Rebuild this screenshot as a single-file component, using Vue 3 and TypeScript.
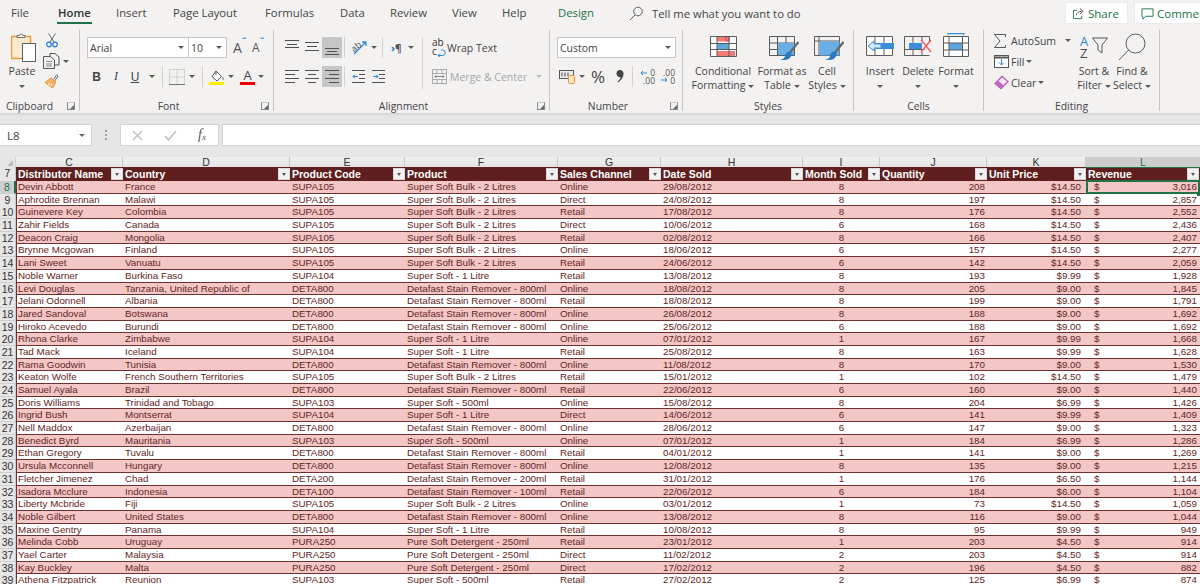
<script setup lang="ts">
const SB2 = 'Super Soft Bulk - 2 Litres'
const S1 = 'Super Soft - 1 Litre'
const S5 = 'Super Soft - 500ml'
const D8 = 'Detafast Stain Remover - 800ml'
const PS = 'Pure Soft Detergent - 250ml'
type Row = [string, string, string, string, string, string, string, string, string, string]
const raw: Row[] = [
  ['Devin Abbott','France','SUPA105',SB2,'Online','29/08/2012','8','208','$14.50','3,016'],
  ['Aphrodite Brennan','Malawi','SUPA105',SB2,'Direct','24/08/2012','8','197','$14.50','2,857'],
  ['Guinevere Key','Colombia','SUPA105',SB2,'Retail','17/08/2012','8','176','$14.50','2,552'],
  ['Zahir Fields','Canada','SUPA105',SB2,'Direct','10/06/2012','6','168','$14.50','2,436'],
  ['Deacon Craig','Mongolia','SUPA105',SB2,'Retail','02/08/2012','8','166','$14.50','2,407'],
  ['Brynne Mcgowan','Finland','SUPA105',SB2,'Online','18/06/2012','6','157','$14.50','2,277'],
  ['Lani Sweet','Vanuatu','SUPA105',SB2,'Retail','24/06/2012','6','142','$14.50','2,059'],
  ['Noble Warner','Burkina Faso','SUPA104',S1,'Retail','13/08/2012','8','193','$9.99','1,928'],
  ['Levi Douglas','Tanzania, United Republic of','DETA800',D8,'Online','18/08/2012','8','205','$9.00','1,845'],
  ['Jelani Odonnell','Albania','DETA800',D8,'Retail','18/08/2012','8','199','$9.00','1,791'],
  ['Jared Sandoval','Botswana','DETA800',D8,'Online','26/08/2012','8','188','$9.00','1,692'],
  ['Hiroko Acevedo','Burundi','DETA800',D8,'Online','25/06/2012','6','188','$9.00','1,692'],
  ['Rhona Clarke','Zimbabwe','SUPA104',S1,'Online','07/01/2012','1','167','$9.99','1,668'],
  ['Tad Mack','Iceland','SUPA104',S1,'Retail','25/08/2012','8','163','$9.99','1,628'],
  ['Rama Goodwin','Tunisia','DETA800',D8,'Online','11/08/2012','8','170','$9.00','1,530'],
  ['Keaton Wolfe','French Southern Territories','SUPA105',SB2,'Retail','15/01/2012','1','102','$14.50','1,479'],
  ['Samuel Ayala','Brazil','DETA800',D8,'Retail','22/06/2012','6','160','$9.00','1,440'],
  ['Doris Williams','Trinidad and Tobago','SUPA103',S5,'Online','15/08/2012','8','204','$6.99','1,426'],
  ['Ingrid Bush','Montserrat','SUPA104',S1,'Direct','14/06/2012','6','141','$9.99','1,409'],
  ['Nell Maddox','Azerbaijan','DETA800',D8,'Online','28/06/2012','6','147','$9.00','1,323'],
  ['Benedict Byrd','Mauritania','SUPA103',S5,'Online','07/01/2012','1','184','$6.99','1,286'],
  ['Ethan Gregory','Tuvalu','DETA800',D8,'Retail','04/01/2012','1','141','$9.00','1,269'],
  ['Ursula Mcconnell','Hungary','DETA800',D8,'Online','12/08/2012','8','135','$9.00','1,215'],
  ['Fletcher Jimenez','Chad','DETA200','Detafast Stain Remover - 200ml','Retail','31/01/2012','1','176','$6.50','1,144'],
  ['Isadora Mcclure','Indonesia','DETA100','Detafast Stain Remover - 100ml','Retail','22/06/2012','6','184','$6.00','1,104'],
  ['Liberty Mcbride','Fiji','SUPA105',SB2,'Online','03/01/2012','1','73','$14.50','1,059'],
  ['Noble Gilbert','United States','DETA800',D8,'Online','13/08/2012','8','116','$9.00','1,044'],
  ['Maxine Gentry','Panama','SUPA104',S1,'Retail','10/08/2012','8','95','$9.99','949'],
  ['Melinda Cobb','Uruguay','PURA250',PS,'Retail','23/01/2012','1','203','$4.50','914'],
  ['Yael Carter','Malaysia','PURA250',PS,'Direct','11/02/2012','2','203','$4.50','914'],
  ['Kay Buckley','Malta','PURA250',PS,'Direct','17/02/2012','2','196','$4.50','882'],
  ['Athena Fitzpatrick','Reunion','SUPA103',S5,'Retail','27/02/2012','2','125','$6.99','874'],
]
const rows = raw.map((cells, i) => ({ num: i + 8, cells, pink: i % 2 === 0, selected: i === 0 }))
const letters = ['C','D','E','F','G','H','I','J','K','L']
const heads = ['Distributor Name','Country','Product Code','Product','Sales Channel','Date Sold','Month Sold','Quantity','Unit Price','Revenue']
const tabs = ['File','Home','Insert','Page Layout','Formulas','Data','Review','View','Help','Design']
</script>

<template>
  <div class="app">
    <header class="tabbar">
      <nav class="tabs">
        <span v-for="t in tabs" :key="t" class="tab" :class="['tab-' + t.replace(' ', ''), { green: t === 'Design' }]">{{ t }}</span>
      </nav>
      <div class="tell">
        <svg width="14" height="15" viewBox="0 0 14 15" fill="none" stroke="#5f5f5f"><circle cx="9" cy="5.5" r="4.3"/><path d="M6 9 1 14"/></svg>
        <span>Tell me what you want to do</span>
      </div>
      <div class="share-wrap">
        <button class="topbtn share">
          <svg width="13" height="13" viewBox="0 0 14 14" fill="none" stroke="#217346"><path d="M5.5 3.5H1.5v9h9v-3"/><path d="M4.5 9c.5-3 3-4.5 6-4.5M8.5 1.5l3.500 3-3.500 3" stroke="#555"/></svg>
          <span>Share</span>
        </button>
        <button class="topbtn comments">
          <svg width="13" height="13" viewBox="0 0 14 14" fill="none" stroke="#217346"><path d="M1 2h12v8H5l-3 3v-3H1z"/></svg>
          <span>Comments</span>
        </button>
      </div>
    </header>

    <section class="ribbon">
      <!-- Clipboard -->
      <div class="group g-clip">
        <div class="body">
          <div class="big w44">
            <div class="bigicon pasteico">
              <svg width="26" height="30" viewBox="0 0 26 30" fill="none">
                <rect x="0.5" y="3.5" width="19" height="22" fill="#fbe9cf" stroke="#ec9b3b" stroke-width="1.5"/>
                <path d="M6 4.500V2.500h2.500a1.500 1.500 0 0 1 3 0H14v2z" fill="#fff" stroke="#6a6a6a"/>
                <rect x="11.5" y="10.5" width="13" height="18" fill="#fff" stroke="#5f5f5f"/>
              </svg>
            </div>
            <span class="l">Paste</span>
            <span class="l"><i class="caret"></i></span>
          </div>
          <div class="clipside">
            <svg width="12" height="15" viewBox="0 0 12 15" fill="none"><path d="M2.500 0.500 8 9M9.500 0.500 4 9" stroke="#666"/><circle cx="3" cy="11.5" r="2.3" stroke="#2b7cd3" stroke-width="1.2"/><circle cx="9" cy="11.5" r="2.3" stroke="#2b7cd3" stroke-width="1.2"/></svg>
            <div class="row6">
              <svg width="17" height="16" viewBox="0 0 17 16" fill="none" stroke="#555"><path d="M7 3.5V.5h5l4 3.500v8h-4"/><path d="M.5 3.500h7l4 3.500v8.500H.5z" fill="#f3f2f1"/><path d="M3 8.500h6M3 11h6M3 13h6" stroke="#888"/></svg>
              <i class="caret"></i>
            </div>
            <svg width="15" height="15" viewBox="0 0 15 15" fill="none"><path d="M9.500 5.500 12.500 1l1.500 1-3 4.500" fill="#fff" stroke="#666"/><path d="M7 4l5 3.500L8.500 14 1 8.500z" fill="#f6b26b" stroke="#e8923a"/><path d="M4 11l2-2M6.500 12.500 8 10" stroke="#fff"/></svg>
          </div>
        </div>
        <div class="label lb-clip"><span>Clipboard</span><i class="launch"></i></div>
      </div>

      <!-- Font -->
      <div class="group g-font">
        <div class="body stack">
          <div class="row">
            <div class="combo w101">Arial<i class="caret end"></i></div>
            <div class="combo w39">10<i class="caret end"></i></div>
            <span class="fsz ml6">A<sup class="up">ˆ</sup></span>
            <span class="fsz small ml3">A<sup class="dn">ˇ</sup></span>
          </div>
          <div class="row">
            <span class="fmt bold">B</span>
            <span class="fmt ital">I</span>
            <span class="fmt und">U</span>
            <i class="caret ml4"></i>
            <i class="sep ml7"></i>
            <svg class="ml6" width="16" height="16" viewBox="0 0 16 16" fill="none" stroke="#b5b5b5"><path d="M.5.5h15v15H.5zM8 .5v15M.5 8h15" stroke-dasharray="1 1"/><path d="M0 15.500h16" stroke="#777"/></svg>
            <i class="caret ml4"></i>
            <i class="sep ml7"></i>
            <span class="colorbtn ml6">
              <svg width="14" height="12" viewBox="0 0 14 12" fill="none"><path d="M6 1l5.500 5.500L7 11 2 6.500z" fill="#fff" stroke="#555"/><path d="M6 1V5" stroke="#555"/><path d="M12.500 7c.8 1.300 1 2 .5 2.700" stroke="#555"/></svg>
              <b class="yellow"></b>
            </span>
            <i class="caret ml4"></i>
            <span class="colorbtn ml6">
              <span class="acolor">A</span>
              <b class="red"></b>
            </span>
            <i class="caret ml3"></i>
          </div>
        </div>
        <div class="label lb-l"><span>Font</span><i class="launch"></i></div>
      </div>

      <!-- Alignment -->
      <div class="group g-align">
        <div class="body">
          <div class="stack leftcol">
            <div class="row">
              <svg class="ico20" width="20" height="21" viewBox="0 0 20 21" fill="none" stroke="#505050"><path d="M3 3.500h14M5 7.500h10M3 10.500h14"/></svg>
              <svg class="ico20" width="20" height="21" viewBox="0 0 20 21" fill="none" stroke="#505050"><path d="M3 5.500h14M5 9.500h10M3 13.500h14"/></svg>
              <svg class="ico20 on" width="20" height="21" viewBox="0 0 20 21" fill="none" stroke="#505050"><path d="M3 11.500h14M5 14.500h10M3 17.500h14"/></svg>
              <i class="sep ml2"></i>
              <svg class="ml6" width="17" height="17" viewBox="0 0 17 17" fill="none"><text x="0" y="11" font-size="9" fill="#555" font-family="Open Sans" transform="rotate(-40 5 8)">ab</text><path d="M3 15 15 3M15 3h-4M15 3v4" stroke="#2b88d8" stroke-width="1.3"/></svg>
              <i class="caret ml3"></i>
              <i class="sep ml5"></i>
              <span class="pil ml8"><b>›</b>¶</span>
              <i class="caret ml6"></i>
            </div>
            <div class="row">
              <svg class="ico20" width="20" height="21" viewBox="0 0 20 21" fill="none" stroke="#505050"><path d="M3 4.500h14M3 8.500h10M3 12.500h14M3 16.500h10"/></svg>
              <svg class="ico20" width="20" height="21" viewBox="0 0 20 21" fill="none" stroke="#505050"><path d="M3 4.500h14M6 8.500h8M3 12.500h14M6 16.500h8"/></svg>
              <svg class="ico20 on" width="20" height="21" viewBox="0 0 20 21" fill="none" stroke="#505050"><path d="M3 4.500h14M7 8.500h10M3 12.500h14M7 16.500h10"/></svg>
              <i class="sep ml2"></i>
              <svg class="ml7" width="13" height="13" viewBox="0 0 13 13" fill="none" stroke="#505050"><path d="M0 .5h13M7 4.500h6M7 8.500h6M0 12.500h13"/><path d="M6 6.500H1M3 4.500l-2 2 2 2" stroke="#2b88d8"/></svg>
              <svg class="ml7" width="13" height="13" viewBox="0 0 13 13" fill="none" stroke="#505050"><path d="M0 .5h13M7 4.500h6M7 8.500h6M0 12.500h13"/><path d="M1 6.500h5M4 4.500l2 2-2 2" stroke="#2b88d8"/></svg>
            </div>
          </div>
          <i class="sep tall"></i>
          <div class="stack wrapcol">
            <div class="row">
              <span class="abc"><span>ab</span><span>c<svg width="9" height="8" viewBox="0 0 9 8" fill="none" stroke="#2b88d8"><path d="M1 6.500h4.500a2 2 0 0 0 0-5.500H4M3 4.500 1 6.500l2 1.500"/></svg></span></span>
              <span class="wraptext">Wrap Text</span>
            </div>
            <div class="row">
              <svg width="15" height="15" viewBox="0 0 15 15" fill="none" stroke="#ababab"><path d="M.5.5h14v14H.5zM.5 4.500h14M.5 10.500h14M5 .5v4M10 .5v4M5 10.500v4M10 10.500v4"/><path d="M3 7.500h9M4.500 6 3 7.500 4.500 9M10.500 6 12 7.500 10.500 9" stroke="#8a8a8a"/></svg>
              <span class="mergetext">Merge &amp; Center</span>
              <i class="caret light ml9"></i>
            </div>
          </div>
        </div>
        <div class="label lb-l"><span>Alignment</span><i class="launch"></i></div>
      </div>

      <!-- Number -->
      <div class="group g-num">
        <div class="body stack">
          <div class="row"><div class="combo w118">Custom<i class="caret end"></i></div></div>
          <div class="row">
            <svg class="ml2" width="16" height="15" viewBox="0 0 16 15" fill="none"><rect x=".5" y="1.5" width="14" height="8" stroke="#555" fill="#eee"/><path d="M3 3.500v4M6 3.500v4M9 3.500v4" stroke="#444"/><rect x="9.5" y="6.5" width="6" height="8" rx="1" fill="#fbe3c5" stroke="#e8923a"/></svg>
            <i class="caret ml4"></i>
            <span class="pct">%</span>
            <svg class="comma" width="8" height="13" viewBox="0 0 8 13"><path d="M4 0a3.500 3.500 0 0 1 3.500 4c0 3.500-2.500 6.500-5.500 8.500l-.5-.8C3.500 10 4.500 8.500 4.700 7.200 2.500 7.600.5 6 .5 3.800A3.600 3.600 0 0 1 4 0z" fill="#444"/></svg>
            <i class="sep ml8"></i>
            <span class="dec ml7"><svg width="15" height="15" viewBox="0 0 15 15" fill="none" stroke="#2b88d8"><path d="M7 4H1M3 2 1 4l2 2"/></svg><em class="d1">0</em><em class="d2">.00</em></span>
            <span class="dec ml5"><em class="d3">.00</em><svg width="15" height="15" viewBox="0 0 15 15" fill="none" stroke="#2b88d8"><path d="M1 11h6M5 9l2 2-2 2"/></svg><em class="d4">0</em></span>
          </div>
        </div>
        <div class="label lb-l"><span>Number</span><i class="launch"></i></div>
      </div>

      <!-- Styles -->
      <div class="group g-styles">
        <div class="body">
          <div class="big w60">
            <div class="bigicon ib">
              <svg width="27" height="21" viewBox="0 0 27 21" fill="none">
                <path d="M.5.5h26v20H.5z" fill="#fff"/>
                <path d="M7 .5h12v5H7zM7 15h18v5H7z" fill="#f47a7a"/>
                <path d="M7 8h12v5H7z" fill="#5ea6e0"/>
                <path d="M19 1h-3v4h3zM19 8h-1" stroke="#e04a4a"/>
                <path d="M.5.5h26v20H.5zM.5 7.500h26M.5 13.500h26M7 .5v20M19 .5v20" stroke="#5b5b5b"/>
              </svg>
            </div>
            <span class="l">Conditional</span>
            <span class="l">Formatting<i class="caret ml3"></i></span>
          </div>
          <div class="big w58">
            <div class="bigicon ib2">
              <svg width="30" height="25" viewBox="0 0 30 25" fill="none">
                <path d="M.5.5h25v19H.5zM.5 7h25M.5 13.500h25M8.500.5v19M17 .5v19" stroke="#5b5b5b"/>
                <path d="M9 7h16v12H9z" fill="#6aaee6"/>
                <path d="M29.500 6 20.500 17" stroke="#6b6b6b" stroke-width="2.5"/>
                <path d="M21 15.500c-3-.5-4.500 2-5 5-.3 1.500-2 2.500-5 3 5 1 9 .5 11-3 1-1.500.5-4-1-5z" fill="#2b79c2"/>
              </svg>
            </div>
            <span class="l">Format as</span>
            <span class="l">Table<i class="caret ml3"></i></span>
          </div>
          <div class="big w32">
            <div class="bigicon ib2">
              <svg width="30" height="25" viewBox="0 0 30 25" fill="none">
                <path d="M.5.5h25v19H.5zM.5 5h25M5 .5v19" stroke="#5b5b5b"/>
                <path d="M5.500 5.500h20v14h-20z" fill="#6aaee6"/>
                <path d="M29.500 6 20.500 17" stroke="#6b6b6b" stroke-width="2.5"/>
                <path d="M21 15.500c-3-.5-4.500 2-5 5-.3 1.500-2 2.500-5 3 5 1 9 .5 11-3 1-1.500.5-4-1-5z" fill="#2b79c2"/>
              </svg>
            </div>
            <span class="l">Cell</span>
            <span class="l">Styles<i class="caret ml3"></i></span>
          </div>
        </div>
        <div class="label"><span>Styles</span></div>
      </div>

      <!-- Cells -->
      <div class="group g-cells">
        <div class="body">
          <div class="big w38">
            <div class="bigicon ib">
              <svg width="28" height="20" viewBox="0 0 28 20" fill="none">
                <path d="M.5.5h26v19H.5z" stroke="#5b5b5b" fill="#fff"/><path d="M9 .5v19M18 .5v19" stroke="#5b5b5b"/>
                <rect x="10" y="7" width="18" height="6" fill="#3b8edb"/>
                <path d="M2 10l6-5v3h7v4H8v3z" fill="#d8eafa" stroke="#3b8edb"/>
              </svg>
            </div>
            <span class="l">Insert</span>
            <span class="l"><i class="caret"></i></span>
          </div>
          <div class="big w38">
            <div class="bigicon ib">
              <svg width="28" height="20" viewBox="0 0 28 20" fill="none">
                <path d="M.5.5h25v6M.5 .5v19h25M.5 13.500h20M9 .5v19M18 .5v5M18 16v3.500" stroke="#5b5b5b"/>
                <rect x="5" y="7" width="13" height="6" fill="#3b8edb"/>
                <path d="M17 4l10 12M27 4 17 16" stroke="#f25c5c" stroke-width="1.4"/>
              </svg>
            </div>
            <span class="l">Delete</span>
            <span class="l"><i class="caret"></i></span>
          </div>
          <div class="big w38">
            <div class="bigicon ib3">
              <svg width="26" height="24" viewBox="0 0 26 24" fill="none">
                <path d="M5 .5h16" stroke="#3b8edb" stroke-width="1.5"/><path d="M5 0v2M21 0v2" stroke="#3b8edb"/>
                <path d="M.5 3.500h25v20H.5z" fill="#fff" stroke="#5b5b5b"/>
                <rect x="6" y="10" width="14" height="7" fill="#5ea6e0"/>
                <path d="M.5 10h25M.5 17h25M6 3.500v20M19.500 3.500v20" stroke="#5b5b5b"/>
              </svg>
            </div>
            <span class="l">Format</span>
            <span class="l"><i class="caret"></i></span>
          </div>
        </div>
        <div class="label"><span>Cells</span></div>
      </div>

      <!-- Editing -->
      <div class="group g-edit">
        <div class="body">
          <div class="editcol">
            <div class="editrow">
              <span class="ei"><svg width="12" height="14" viewBox="0 0 12 14" fill="none" stroke="#555"><path d="M11.500 3V.5H.5L6 7 .5 13.500h11V11"/></svg></span>
              <span>AutoSum</span>
              <i class="caret ml9"></i>
            </div>
            <div class="editrow">
              <span class="ei"><svg width="15" height="13" viewBox="0 0 15 13" fill="none"><rect x=".5" y=".5" width="14" height="12" fill="#fff" stroke="#555"/><path d="M.5 2.500h14" stroke="#555" stroke-width="2"/><path d="M7.500 4v6M5 7.500l2.500 2.500L10 7.500" stroke="#2b88d8"/></svg></span>
              <span>Fill</span>
              <i class="caret ml2"></i>
            </div>
            <div class="editrow">
              <span class="ei"><svg width="15" height="15" viewBox="0 0 15 15" fill="none"><path d="M1 8.500 8 1.500l6 5-7 7z" fill="#f5e6f5" stroke="#b55fb5" stroke-width="1.3"/><path d="M1 8.500l3-3 6 5-3 3z" fill="#c26ac2"/></svg></span>
              <span>Clear</span>
              <i class="caret ml2"></i>
            </div>
          </div>
          <div class="big w38">
            <div class="bigicon sortico">
              <span class="az"><b>A</b><b class="z">Z</b></span>
              <svg width="16" height="17" viewBox="0 0 16 17" fill="none" stroke="#5b5b5b"><path d="M.5 1h15L10 8v8l-4-3V8z"/></svg>
            </div>
            <span class="l">Sort &amp;</span>
            <span class="l">Filter<i class="caret ml3"></i></span>
          </div>
          <div class="big w38">
            <div class="bigicon ib0">
              <svg width="28" height="28" viewBox="0 0 28 28" fill="none" stroke="#5b5b5b"><circle cx="17.5" cy="10.5" r="9.500"/><path d="M10.500 17 1 27"/></svg>
            </div>
            <span class="l">Find &amp;</span>
            <span class="l">Select<i class="caret ml3"></i></span>
          </div>
        </div>
        <div class="label"><span>Editing</span></div>
      </div>
    </section>

    <section class="fbar">
      <div class="namebox">L8<i class="caret end dk"></i></div>
      <div class="dots"><i></i><i></i><i></i></div>
      <div class="fbtns">
        <svg width="11" height="11" viewBox="0 0 11 11" fill="none" stroke="#c2c2c2" stroke-width="1.4"><path d="M1 1l9 9M10 1l-9 9"/></svg>
        <svg width="13" height="11" viewBox="0 0 13 11" fill="none" stroke="#c2c2c2" stroke-width="1.6"><path d="M1 6l3.500 4L12 1"/></svg>
        <span class="fx">f<sub>x</sub></span>
      </div>
      <div class="finput"></div>
    </section>

    <section class="sheet">
      <div class="gridrow colhead">
        <div class="corner"><i></i></div>
        <div v-for="l in letters" :key="l" class="letter" :class="{ cur: l === 'L' }">{{ l }}</div>
      </div>
      <div class="gridrow headrow">
        <div class="rownum">7</div>
        <div v-for="h in heads" :key="h" class="hcell">
          <span>{{ h }}</span>
          <i class="filter"></i>
        </div>
      </div>
      <div v-for="r in rows" :key="r.num" class="gridrow datarow" :class="{ pink: r.pink }">
        <div class="rownum" :class="{ cur: r.selected }">{{ r.num }}</div>
        <div class="c first">{{ r.cells[0] }}</div>
        <div class="c">{{ r.cells[1] }}</div>
        <div class="c">{{ r.cells[2] }}</div>
        <div class="c">{{ r.cells[3] }}</div>
        <div class="c">{{ r.cells[4] }}</div>
        <div class="c">{{ r.cells[5] }}</div>
        <div class="c mid">{{ r.cells[6] }}</div>
        <div class="c num">{{ r.cells[7] }}</div>
        <div class="c num price">{{ r.cells[8] }}</div>
        <div class="c rev" :class="{ sel: r.selected }"><span class="dollar">$</span><span>{{ r.cells[9] }}</span></div>
      </div>
    </section>
  </div>
</template>

<style>
html, body { margin: 0; background: #f3f2f1; }
</style>

<style scoped>
.app { width: 1200px; height: 584px; overflow: hidden; background: #f3f2f1; font-family: "Open Sans", "Noto Sans", sans-serif; color: #444; font-size: 10.5px; }
i, b, em { font-style: normal; }
button { font: inherit; }

/* tab bar */
.tabbar { height: 28px; display: flex; align-items: flex-start; }
.tabs { display: flex; padding-left: 11px; width: 619px; flex: none; box-sizing: border-box; }
.tab { font-size: 11.3px; line-height: 26px; height: 26px; color: #444; box-sizing: border-box; white-space: nowrap; }
.tab-File { width: 47px; }
.tab-Home { width: 58px; font-weight: 600; color: #333; position: relative; }
.tab-Home::after { content: ""; position: absolute; left: -1px; width: 35px; top: 22px; height: 2px; background: #217346; }
.tab-Insert { width: 57px; }
.tab-PageLayout { width: 92px; }
.tab-Formulas { width: 75px; }
.tab-Data { width: 50px; }
.tab-Review { width: 62px; }
.tab-View { width: 50px; }
.tab-Help { width: 56px; }
.tab-Design { width: 50px; }
.green { color: #217346; }
.tell { display: flex; align-items: center; gap: 9px; height: 26px; width: 437px; flex: none; font-size: 11.3px; margin-left: 10px; box-sizing: border-box; }
.share-wrap { display: flex; gap: 8px; padding-top: 3px; white-space: nowrap; flex: none; }
.topbtn { height: 20px; display: flex; align-items: center; gap: 3px; border: 0; background: #fff; color: #217346; font-size: 11.5px; padding: 0 0 0 6px; box-shadow: 0 0 0 1px #ecebea; flex: none; }
.topbtn svg { flex: none; }
.share { width: 61px; }
.comments { width: 65px; overflow: hidden; }

/* ribbon */
.ribbon { height: 85px; display: flex; padding-top: 2px; box-sizing: border-box; }
.group { height: 81px; border-right: 1px solid #c8c6c4; display: flex; flex-direction: column; box-sizing: content-box; flex: none; }
.g-clip { width: 79px; }
.g-font { width: 193px; }
.g-align { width: 275px; }
.g-num { width: 132px; }
.g-styles { width: 170px; }
.g-cells { width: 129px; }
.g-edit { width: 175px; }
.body { flex: 1; display: flex; min-height: 0; }
.label { height: 14px; line-height: 14px; font-size: 10.4px; text-align: center; position: relative; color: #444; margin-bottom: -2px; flex: none; }
.lb-l { padding-right: 16px; }
.lb-clip { padding-right: 20px; }
.launch { position: absolute; right: 4px; top: 3px; width: 8px; height: 8px; border: 1px solid #8a8a8a; border-top-color: #c8c8c8; box-sizing: border-box; }
.launch::after { content: ""; position: absolute; right: 0; bottom: 0; border-style: solid; border-width: 0 0 4px 4px; border-color: transparent transparent #666 transparent; }

.caret { display: inline-block; width: 0; height: 0; border-style: solid; border-width: 3px 3px 0 3px; border-color: #5a5a5a transparent transparent transparent; vertical-align: middle; flex: none; }
.caret.light { border-top-color: #b9b9b9; }
.caret.end { margin-left: auto; margin-right: 4px; }
.caret.dk { border-top-color: #666; margin-right: 6px; }
.ml2 { margin-left: 2px; } .ml3 { margin-left: 3px; } .ml4 { margin-left: 4px; } .ml5 { margin-left: 5px; }
.ml6 { margin-left: 6px; } .ml7 { margin-left: 7px; } .ml8 { margin-left: 8px; } .ml9 { margin-left: 9px; }
.sep { display: block; width: 1px; height: 21px; background: #d4d2d0; flex: none; }
.sep.tall { height: 52px; margin-top: 7px; }

.big { display: flex; flex-direction: column; align-items: center; flex: none; padding-top: 3px; box-sizing: border-box; }
.big .l { height: 14px; line-height: 14px; white-space: nowrap; font-size: 10.5px; color: #444; }
.bigicon { height: 31px; display: flex; align-items: flex-start; justify-content: center; }
.pasteico { padding-left: 3px; }
.ib { padding-top: 3px; height: 28px; }
.ib2 { padding-top: 3px; height: 28px; padding-left: 3px; }
.w44 { width: 44px; } .w60 { width: 60px; } .w58 { width: 58px; } .w32 { width: 32px; } .w38 { width: 38px; }

.clipside { width: 28px; display: flex; flex-direction: column; gap: 5px; padding-top: 3px; box-sizing: border-box; }
.row6 { display: flex; align-items: center; gap: 3px; margin-left: -1px; }
.clipside > svg:first-child { margin-left: 2px; }

.stack { display: flex; flex-direction: column; gap: 8px; padding-top: 7px; box-sizing: border-box; }
.row { display: flex; align-items: center; height: 21px; flex: none; }
.g-font .body { padding-left: 7px; }
.g-align .body { padding-left: 8px; }
.g-num .body { padding-left: 7px; }
.g-styles .body { padding-left: 10px; }
.g-cells .body { padding-left: 7px; }
.leftcol { width: 140px; flex: none; }
.combo { height: 21px; background: #fff; border: 1px solid #c8c6c4; box-sizing: border-box; display: flex; align-items: center; padding-left: 2px; font-size: 10.5px; color: #444; }
.w101 { width: 102px; } .w39 { width: 39px; margin-left: -1px; } .w118 { width: 119px; }
.fsz { font-size: 14px; color: #555; line-height: 21px; display: inline-flex; width: 16px; }
.fsz.small { font-size: 12px; }
.fsz sup { font-size: 10px; color: #2b88d8; line-height: 1; font-weight: 700; }
.fmt { width: 19px; text-align: center; font-size: 12px; color: #444; font-family: "Liberation Serif", serif; }
.fmt.bold { font-weight: 700; font-family: "Liberation Sans", sans-serif; }
.fmt.ital { font-style: italic; padding-left: 1px; box-sizing: border-box; }
.fmt.und { text-decoration: underline; width: 20px; font-family: "Liberation Sans", sans-serif; }
.colorbtn { display: flex; flex-direction: column; align-items: center; width: 15px; height: 16px; justify-content: flex-end; }
.yellow, .red { display: block; width: 15px; height: 3px; background: #ffee00; flex: none; }
.red { background: #f00000; }
.acolor { font-size: 13px; line-height: 13px; color: #444; }

.ico20 { flex: none; box-sizing: border-box; }
.ico20.on { background: #c6c6c6; }
.pil { font-size: 10px; font-weight: 700; color: #555; width: 11px; white-space: nowrap; line-height: 12px; }
.pil b { color: #2b88d8; }
.wrapcol { padding-left: 9px; }
.abc { display: flex; flex-direction: column; font-size: 10px; line-height: 9px; color: #333; width: 15px; white-space: nowrap; }
.abc svg { vertical-align: middle; }
.wraptext { font-size: 10.5px; color: #444; }
.mergetext { font-size: 10.5px; color: #a6a6a6; margin-left: 3px; white-space: nowrap; }

.pct { font-size: 17px; line-height: 21px; color: #444; margin-left: 6px; width: 16px; }
.comma { margin-left: 9px; flex: none; }
.dec { position: relative; width: 15px; height: 16px; display: block; }
.dec svg { position: absolute; left: 0; top: 0; }
.dec em { position: absolute; font-size: 8.5px; line-height: 8px; color: #555; white-space: nowrap; }
.d1 { right: 0; top: 0; } .d2 { right: 0; bottom: 0; } .d3 { right: 0; top: 0; } .d4 { right: 0; bottom: 0; }

.editcol { width: 91px; padding-left: 10px; box-sizing: border-box; flex: none; }
.editrow { display: flex; align-items: center; height: 21px; white-space: nowrap; font-size: 10.5px; }
.ei { width: 17px; display: flex; flex: none; }
.sortico { padding-top: 2px; height: 29px; align-items: flex-start; }
.az { display: flex; flex-direction: column; font-size: 13px; line-height: 12px; width: 12px; color: #2b88d8; }
.az b { font-weight: 400; }
.az .z { color: #444; }
.sortico svg { margin-top: 2px; }

/* formula bar */
.fbar { height: 44px; background: linear-gradient(#cfcfcf 0, #e6e6e6 3px, #e6e6e6 100%); display: flex; padding-top: 11px; box-sizing: border-box; align-items: flex-start; }
.namebox { width: 92px; height: 22px; background: #fff; border: 1px solid #d4d4d4; border-left: 0; box-sizing: border-box; display: flex; align-items: center; padding-left: 7px; font-size: 11.5px; color: #444; flex: none; }
.dots { width: 28px; height: 22px; display: flex; flex-direction: column; gap: 2px; align-items: center; justify-content: center; flex: none; }
.dots i { width: 2px; height: 2px; background: #a0a0a0; }
.fbtns { width: 99px; height: 22px; background: #fff; border: 1px solid #d4d4d4; box-sizing: border-box; display: flex; align-items: center; gap: 21px; padding-left: 11px; flex: none; }
.fx { font-family: "Liberation Serif", serif; font-style: italic; font-size: 14px; color: #555; }
.fx sub { font-size: 9px; vertical-align: -1px; }
.finput { flex: 1; height: 22px; margin-left: 3px; background: #fff; border: 1px solid #d4d4d4; border-right: 0; box-sizing: border-box; }

/* sheet */
.sheet { background: #fff; font-family: "Liberation Sans", Arial, sans-serif; }
.gridrow { display: grid; grid-template-columns: 16px 107px 167px 115px 153px 103px 142px 77px 107px 99px 114px; box-sizing: border-box; }
.colhead { height: 10px; background: #e6e6e6; font-size: 10.5px; line-height: 10px; color: #333; }
.corner { position: relative; border-right: 1px solid #cfcfcf; box-sizing: border-box; }
.corner i { position: absolute; right: 2px; bottom: 1px; border-style: solid; border-width: 0 0 6px 6px; border-color: transparent transparent #bdbdbd transparent; }
.letter { text-align: center; border-right: 1px solid #c9c9c9; box-sizing: border-box; background: linear-gradient(#efefef, #e4e4e4); }
.letter.cur { background: #cdcdcd; color: #217346; border-right: 0; }
.headrow { height: 14px; background: #5e1f1e; color: #fff; }
.rownum { background: #e6e6e6; color: #333; font-size: 10.5px; text-align: center; border-right: 1px solid #c9c9c9; box-sizing: border-box; line-height: 13px; }
.rownum.cur { background: #cdcdcd; color: #217346; border-right: 2px solid #217346; }
.hcell { position: relative; font-weight: 700; font-size: 10.5px; line-height: 14px; padding-left: 2px; white-space: nowrap; box-sizing: border-box; min-width: 0; }
.hcell:last-child { border-top: 1px solid #217346; line-height: 13px; }
.filter { position: absolute; right: 0; top: 1px; width: 12px; height: 12px; background: #f1f1f1; border: 1px solid #d9d9d9; box-sizing: border-box; }
.hcell:last-child .filter { top: 0; right: 1px; }
.filter::after { content: ""; position: absolute; left: 3px; top: 4px; border-style: solid; border-width: 3px 2.5px 0 2.5px; border-color: #555 transparent transparent transparent; }
.datarow { height: 12.7px; background: #fff; color: #632523; border-bottom: 1px solid #6f3030; font-size: 9.8px; line-height: 12px; }
.datarow.pink { background: #f4c7c7; }
.datarow .rownum { color: #333; border-bottom: 1px solid #d0d0d0; margin-bottom: -1px; line-height: 12px; }
.datarow .rownum.cur { color: #217346; }
.c { padding-left: 2px; white-space: nowrap; overflow: hidden; box-sizing: border-box; min-width: 0; }
.c.first { border-left: 1px solid #6f3030; padding-left: 1px; }
.c.mid { text-align: center; padding-right: 2px; }
.c.num { text-align: right; padding-right: 2px; }
.c.price { padding-right: 5px; }
.c.rev { display: flex; justify-content: space-between; padding: 0 3px 0 8px; overflow: visible; position: relative; }
.dollar { width: 8px; }
.c.sel::after { content: ""; position: absolute; inset: -1px 0 -1px 0; border: 2px solid #217346; box-sizing: border-box; pointer-events: none; }
.c.sel::before { content: ""; position: absolute; right: 0; bottom: -3px; width: 3px; height: 4px; background: #217346; z-index: 1; }
</style>
